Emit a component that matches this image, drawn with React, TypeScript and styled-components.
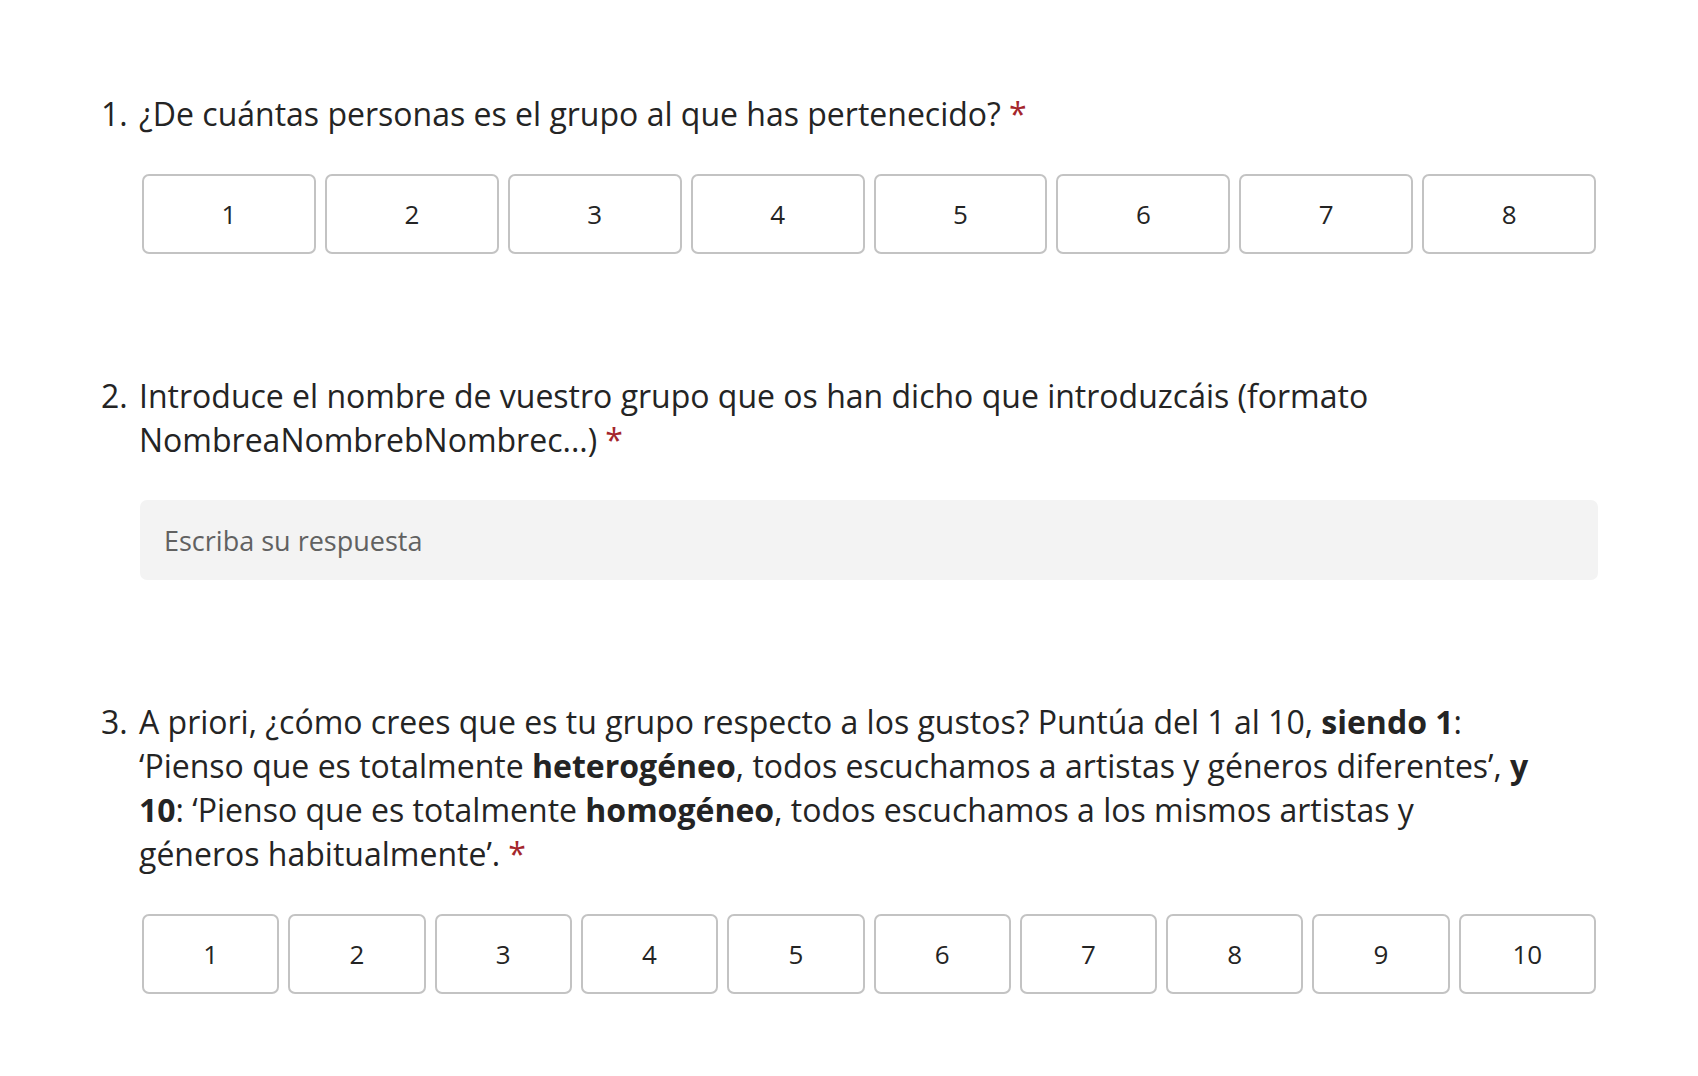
import React from "react";
import styled, { createGlobalStyle } from "styled-components";

const Global = createGlobalStyle`
  html, body { margin: 0; padding: 0; background: #ffffff; }
  body { font-family: "Open Sans", "Noto Sans", sans-serif; color: #242424; }
`;

const Page = styled.div`
  width: 1698px;
  padding: 92px 100px 60px 101px;
  box-sizing: border-box;
  display: flex;
  flex-direction: column;
  gap: 120px;
`;

const Question = styled.section`
  display: flex;
  flex-direction: column;
  gap: 38px;
`;

const Title = styled.div`
  display: flex;
  font-size: 32px;
  line-height: 44px;
  color: #242424;
`;

const Num = styled.span`
  flex: 0 0 38px;
`;

const TitleText = styled.span`
  flex: 1;
  white-space: nowrap;
  b { font-weight: 700; }
`;

const Required = styled.span`
  color: #a4262c;
  margin-left: 8px;
`;

const Answer = styled.div`
  margin-left: 39px;
`;

const Scale = styled.div<{ $count: number }>`
  display: grid;
  grid-template-columns: repeat(${(p) => p.$count}, 1fr);
  gap: 9px;
  padding: 0 2px;
`;

const Option = styled.button`
  height: 80px;
  box-sizing: border-box;
  border: 2px solid #c3c3c3;
  border-radius: 7px;
  background: #ffffff;
  font-family: "Open Sans", "Noto Sans", sans-serif;
  font-size: 26px;
  color: #242424;
  padding: 0;
  cursor: pointer;
`;

const Input = styled.div`
  height: 80px;
  box-sizing: border-box;
  background: #f3f3f3;
  border-radius: 7px;
  display: flex;
  align-items: center;
  padding-left: 24px;
  font-size: 27px;
  color: #616161;
`;

const range = (n: number) => Array.from({ length: n }, (_, i) => i + 1);

export default function App() {
  return (
    <>
      <Global />
      <Page>
        <Question>
          <Title>
            <Num>1.</Num>
            <TitleText>
              ¿De cuántas personas es el grupo al que has pertenecido?
              <Required>*</Required>
            </TitleText>
          </Title>
          <Answer>
            <Scale $count={8}>
              {range(8).map((n) => (
                <Option key={n}>{n}</Option>
              ))}
            </Scale>
          </Answer>
        </Question>

        <Question>
          <Title>
            <Num>2.</Num>
            <TitleText>
              Introduce el nombre de vuestro grupo que os han dicho que introduzcáis (formato
              <br />
              NombreaNombrebNombrec...)
              <Required>*</Required>
            </TitleText>
          </Title>
          <Answer>
            <Input>Escriba su respuesta</Input>
          </Answer>
        </Question>

        <Question>
          <Title>
            <Num>3.</Num>
            <TitleText>
              A priori, ¿cómo crees que es tu grupo respecto a los gustos? Puntúa del 1 al 10, <b>siendo 1</b>:
              <br />
              ‘Pienso que es totalmente <b>heterogéneo</b>, todos escuchamos a artistas y géneros diferentes’, <b>y</b>
              <br />
              <b>10</b>: ‘Pienso que es totalmente <b>homogéneo</b>, todos escuchamos a los mismos artistas y
              <br />
              géneros habitualmente’.
              <Required>*</Required>
            </TitleText>
          </Title>
          <Answer>
            <Scale $count={10}>
              {range(10).map((n) => (
                <Option key={n}>{n}</Option>
              ))}
            </Scale>
          </Answer>
        </Question>
      </Page>
    </>
  );
}
